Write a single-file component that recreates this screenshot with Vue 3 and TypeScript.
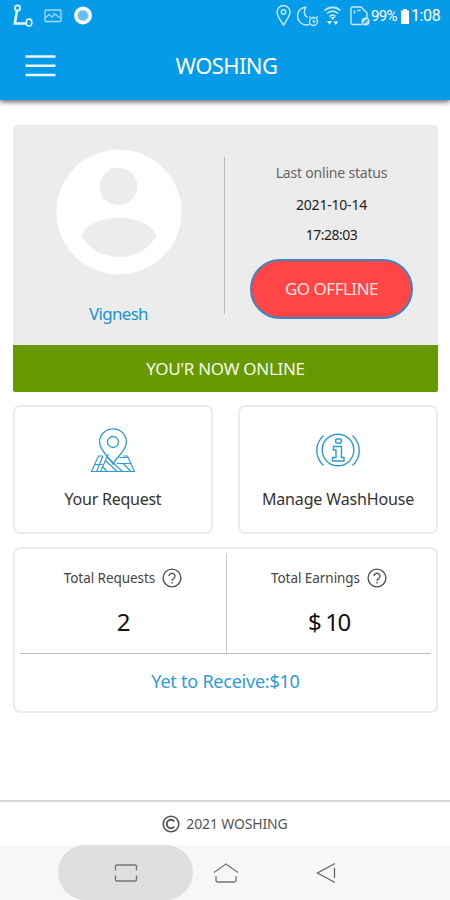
<script setup lang="ts">
interface Tile {
  id: 'map' | 'info'
  label: string
}
interface Stat {
  id: string
  label: string
  value: string
}

const tiles: Tile[] = [
  { id: 'map', label: 'Your Request' },
  { id: 'info', label: 'Manage WashHouse' },
]
const stats: Stat[] = [
  { id: 'requests', label: 'Total Requests', value: '2' },
  { id: 'earnings', label: 'Total Earnings', value: '$ 10' },
]
</script>

<template>
  <div class="screen">
    <header class="top">
      <div class="status">
        <svg class="status-left" width="84" height="30" viewBox="0 0 84 30" fill="none" stroke="#e6f6fe">
          <circle cx="5.500" cy="8" r="2.600" stroke-width="1.800" />
          <path d="M5 10.500 2.800 23.500h11" stroke-width="2.600" />
          <ellipse cx="17" cy="22.500" rx="2.800" ry="3.500" stroke-width="1.600" />
          <rect x="33" y="10" width="16" height="11.500" rx="1" stroke="#a5dcf9" stroke-width="1.300" />
          <path d="M34 17.500l3-3 3 2.500 3-3 5 4M41 13.500h1" stroke="#a5dcf9" stroke-width="1.200" />
          <circle cx="71" cy="15.500" r="9" fill="#fff" stroke="none" />
          <circle cx="71" cy="15.500" r="5.300" fill="#65bdf1" stroke="#a8dcf8" />
        </svg>
        <div class="status-right">
          <svg width="96" height="30" viewBox="0 0 96 30" fill="none" stroke="#c9eafc" stroke-width="1.400">
            <path d="M8.500 25C5 19.500 2 16 2 12a6.500 6.500 0 0 1 13 0c0 4-3 7.500-6.500 13z" />
            <circle cx="8.500" cy="12" r="2.200" />
            <path d="M31 7c-5 .8-8.500 4-8.500 9 0 5 4 9 9 9l3-.5M31 7c-2.500 4-2 8 1.500 10.500" />
            <circle cx="38.500" cy="21.500" r="4" />
            <path d="M38.500 19.500v2.200h2M34 17.500l1.500-1M41.500 16.500l1.500 1" />
            <path d="M49.500 10.500c4.500-4.300 11.500-4.300 16 0M52 13.500c3.200-3 7.800-3 11 0M54.500 16.500c1.800-1.700 4.200-1.700 6 0" stroke-width="1.700" />
            <path d="M55.500 17h4.500l-2.200 3zM52 21h5l-2.500 3.500zM58.500 21.500h4.500l-2.200 3.500z" fill="#fff" stroke="none" />
            <path d="M87 24.500H78a2 2 0 0 1-2-2V9a2 2 0 0 1 2-2h8l6 6v5M79.500 10.500v3M82.500 10.500h3" />
            <circle cx="90.500" cy="21.500" r="3.400" fill="#addef8" />
            <path d="M88.500 23.500l4-4" stroke="#149be8" />
          </svg>
          <span class="pct">99%</span>
          <svg width="8" height="16" viewBox="0 0 8 16" fill="#fff"><path d="M2 1h4v1.500h2V16H0V2.500h2z" /></svg>
          <span class="clock">1:08</span>
        </div>
      </div>
      <div class="bar">
        <svg class="menu" width="31" height="22" viewBox="0 0 31 22" stroke="#ecf8fe" stroke-width="2.500"><path d="M.5 1.500h30M.5 10.700h30M.5 20h30" /></svg>
        <h1>WOSHING</h1>
      </div>
    </header>

    <main>
      <section class="profile">
        <div class="profile-body">
          <div class="person">
            <svg width="126" height="126" viewBox="0 0 126 126">
              <circle cx="63" cy="63" r="62.500" fill="#fff" />
              <circle cx="62.500" cy="37.500" r="18.800" fill="#ececec" />
              <path d="M25.500 87C29 76 46 68.800 63 68.800S97 76 100.500 87C92 101 78 108 63 108S34 101 25.500 87z" fill="#ececec" />
            </svg>
            <span class="name">Vignesh</span>
          </div>
          <div class="rule"></div>
          <div class="session">
            <span class="caption">Last online status</span>
            <span class="date">2021-10-14</span>
            <span class="time">17:28:03</span>
            <button type="button"><span>GO OFFLINE</span></button>
          </div>
        </div>
        <div class="online"><span>YOU'R NOW ONLINE</span></div>
      </section>

      <section class="tiles">
        <div v-for="tile in tiles" :key="tile.id" class="tile" :class="tile.id">
          <svg v-if="tile.id === 'map'" width="46" height="46" viewBox="0 0 46 46" fill="none" stroke="#2d9bd8" stroke-width="1.300">
            <path d="M23 37C20 31 9.500 23.500 9.500 15.300a13.500 13.500 0 0 1 27 0C36.500 23.500 26 31 23 37z" />
            <circle cx="23" cy="15" r="5.500" />
            <path d="M13 29H8.500L1.500 44.500h43L37.500 29H33M16 29l3-1.500M13 29 6.500 44.500M17 30l-6.500 14.500M4.500 37.500h8M18.500 31.500l14 13M16 34l11 10.500M13 40l4 4.500M29.500 30.500h8M27 36.500h14M33 36.500l8 8M22.500 36.500l3 1" stroke-width="1.150" />
          </svg>
          <svg v-else width="46" height="46" viewBox="0 0 46 46" fill="none" stroke="#2d9bd8" stroke-width="1.400">
            <circle cx="23" cy="23" r="15.800" />
            <path d="M8.500 8.500C-.5 17-.5 30 8.500 38.500M37.500 8.500c9 8.500 9 21.500 0 30" />
            <ellipse cx="23.500" cy="14" rx="3" ry="2.300" />
            <path d="M18.500 19.500h8v11h2.500v3.500H17.500v-3.500h3.500v-7.500h-2.500z" />
          </svg>
          <span>{{ tile.label }}</span>
        </div>
      </section>

      <section class="totals">
        <div class="stats">
          <div v-for="stat in stats" :key="stat.id" class="stat" :class="stat.id">
            <div class="stat-label">
              <span>{{ stat.label }}</span>
              <svg width="20" height="20" viewBox="0 0 20 20" fill="none" stroke="#555" stroke-width="1.400">
                <circle cx="10" cy="10" r="8.900" />
                <path d="M7 8a3 2.800 0 1 1 4.800 2.300C10.500 11.200 10 11.500 10 12.800M10 14v1.500" />
              </svg>
            </div>
            <strong><span>{{ stat.value }}</span></strong>
          </div>
        </div>
        <div class="receive"><span>Yet to Receive:$10</span></div>
      </section>
    </main>

    <footer>
      <svg width="18" height="18" viewBox="0 0 18 18" fill="none" stroke="#555">
        <circle cx="9" cy="9" r="7.800" stroke-width="1.600" />
        <path d="M12.300 6.500a4.200 4.200 0 1 0 0 5" stroke-width="1.900" />
      </svg>
      <span>2021 WOSHING</span>
    </footer>

    <nav>
      <div class="key recent">
        <svg width="24" height="20" viewBox="0 0 24 20" fill="none" stroke="#777" stroke-width="1.400"><path d="M1.500 7.500V3.500a1.500 1.500 0 0 1 1.500-1.500h18a1.500 1.500 0 0 1 1.500 1.500v4M1.500 12.500v4A1.500 1.500 0 0 0 3 18h18a1.500 1.500 0 0 0 1.500-1.500v-4" /></svg>
      </div>
      <div class="key home">
        <svg width="26" height="22" viewBox="0 0 26 22" fill="none" stroke="#777" stroke-width="1.300"><path d="M1 10.500 13 2l12 8.500M3 14v4a2 2 0 0 0 2 2h16a2 2 0 0 0 2-2v-4" /></svg>
      </div>
      <div class="key">
        <svg width="20" height="22" viewBox="0 0 20 22" fill="none" stroke="#666" stroke-width="1.300"><path d="M19 1.500 1.500 11 19 20.500M18.500 6v10" /></svg>
      </div>
    </nav>
  </div>
</template>

<style>
body { margin: 0; background: #fff; }
</style>

<style scoped>
.screen {
  display: flex;
  flex-direction: column;
  width: 450px;
  height: 900px;
  overflow: hidden;
  background: #fff;
  color: #333;
  font-family: "Noto Sans", "Open Sans", sans-serif;
  box-sizing: border-box;
}
.screen * { box-sizing: border-box; }
.screen span { white-space: nowrap; }
svg { display: block; flex: none; }

.top {
  flex: none;
  height: 100px;
  background: #069be8;
  box-shadow: 0 2px 5px rgba(0, 0, 0, .6);
  color: #fff;
}
.status {
  display: flex;
  justify-content: space-between;
  height: 32px;
  padding: 0 11px 0 12px;
}
.status-right {
  display: flex;
  align-items: center;
  height: 32px;
  font: 16px/32px Roboto, sans-serif;
}
.status-right > svg:first-child { align-self: flex-start; }
.pct { width: 28px; font-size: 15px; letter-spacing: -.7px; margin-right: 2px; }
.clock { width: 28px; font-size: 16px; letter-spacing: -.4px; margin-left: 2px; }
.bar {
  display: grid;
  grid-template-columns: 31px 1fr 31px;
  align-items: center;
  height: 68px;
  padding: 0 22px 0 25px;
}
h1 {
  margin: 0;
  padding-bottom: 3px;
  text-align: center;
  font-size: 22px;
  line-height: 30px;
  font-weight: 400;
  letter-spacing: -.6px;
}

main { flex: none; padding: 25px 12px 0 13px; }
.profile { overflow: hidden; border-radius: 4px 4px 0 0; }
.profile-body {
  display: grid;
  grid-template-columns: 211px 1px 213px;
  height: 220px;
  background: #ececec;
}
.person {
  display: flex;
  flex-direction: column;
  align-items: center;
  padding-top: 24px;
}
.name {
  margin-top: 26px;
  color: #1b94d3;
  font-size: 17px;
  line-height: 26px;
  letter-spacing: -.7px;
}
.rule { height: 157px; margin-top: 32px; background: #bcbcbc; }
.session {
  display: flex;
  flex-direction: column;
  align-items: center;
  padding-top: 33px;
  color: #222;
  font-size: 14px;
  line-height: 30px;
}
.caption { color: #666; margin-bottom: 2px; letter-spacing: -.2px; }
.date { letter-spacing: -.2px; }
.time { letter-spacing: -.5px; }
button {
  width: 163px;
  height: 60px;
  margin-top: 9px;
  padding: 0;
  border: 2px solid #3a86c2;
  border-radius: 30px;
  background: #ff4545;
  color: #ffe3df;
  font: 17px/24px "Noto Sans", sans-serif;
  letter-spacing: -.5px;
}
.online {
  height: 47px;
  border-radius: 0 0 2px 2px;
  background: #669a00;
  color: #f5faeb;
  text-align: center;
  font-size: 17px;
  line-height: 47px;
  letter-spacing: -.3px;
}
.tiles {
  display: grid;
  grid-template-columns: 200px 200px;
  justify-content: space-between;
  margin-top: 13px;
}
.tile {
  display: flex;
  flex-direction: column;
  align-items: center;
  height: 129px;
  padding-top: 20px;
  border: 2px solid #ebebeb;
  border-radius: 7px;
  font-size: 16px;
  line-height: 24px;
  letter-spacing: -.15px;
}
.tile span { margin-top: 14px; }
.map span { letter-spacing: -.25px; }
.totals {
  height: 166px;
  margin-top: 13px;
  padding: 5px 5px 0;
  border: 2px solid #ebebeb;
  border-radius: 7px;
}
.stats {
  display: grid;
  grid-template-columns: 207px 1fr;
  height: 100px;
  border-bottom: 1px solid #bdbdbd;
}
.stat { display: flex; flex-direction: column; align-items: center; }
.stat.requests { border-right: 1px solid #ccc; }
.stat-label {
  display: flex;
  align-items: center;
  gap: 7px;
  height: 47px;
  color: #444;
  font-size: 13.500px;
  letter-spacing: -.05px;
}
strong {
  color: #111;
  font-size: 24px;
  font-weight: 400;
  line-height: 42px;
  letter-spacing: -1.400px;
}
.receive {
  color: #2d9bd8;
  text-align: center;
  font-size: 18px;
  line-height: 54px;
  letter-spacing: -.23px;
}
footer {
  display: flex;
  flex: none;
  align-items: center;
  justify-content: center;
  gap: 6px;
  height: 45px;
  margin-top: auto;
  border-top: 2px solid #d8d8d8;
  color: #555;
  font-size: 14px;
  letter-spacing: -.15px;
}
nav {
  display: grid;
  flex: none;
  grid-template-columns: 135px 66px 134px;
  height: 55px;
  padding-left: 58px;
  background: #f7f7f7;
}
.key { display: flex; align-items: center; justify-content: center; }
.recent { border-radius: 28px; background: #dfdfdf; }
</style>
